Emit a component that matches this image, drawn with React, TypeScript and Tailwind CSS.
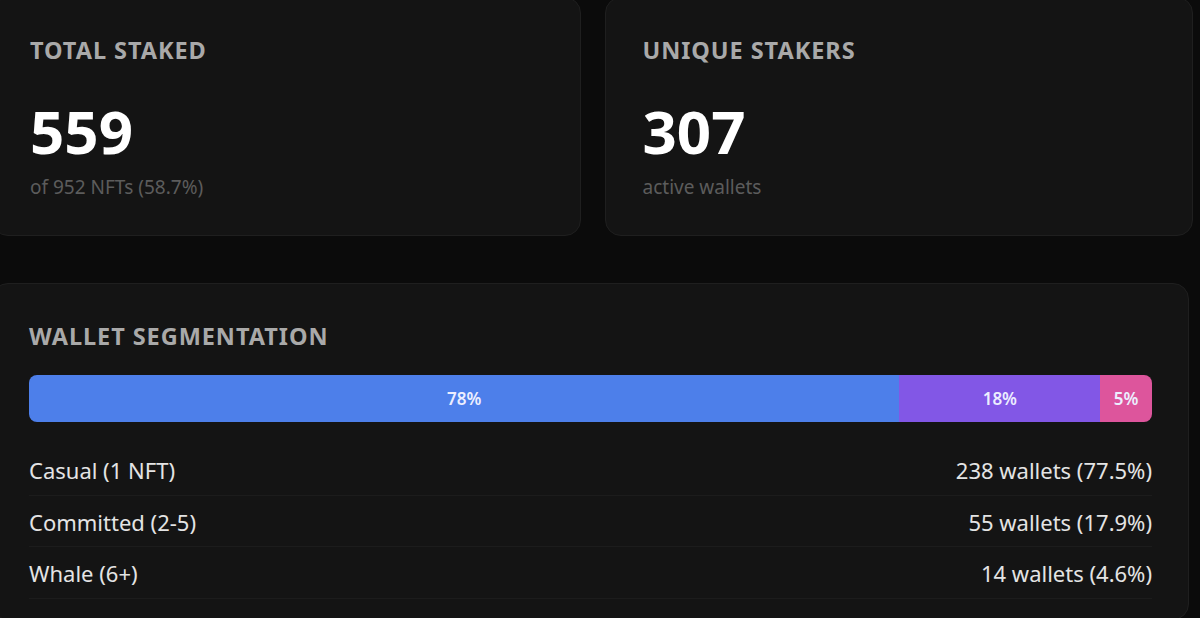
const segments = [
  { label: '78%', pct: 77.5, color: 'bg-[#4d7fea]' },
  { label: '18%', pct: 17.9, color: 'bg-[#8257e6]' },
  { label: '5%', pct: 4.6, color: 'bg-[#dd559c]' },
];

const rows = [
  { name: 'Casual (1 NFT)', value: '238 wallets (77.5%)' },
  { name: 'Committed (2-5)', value: '55 wallets (17.9%)' },
  { name: 'Whale (6+)', value: '14 wallets (4.6%)' },
];

function StatCard({ title, value, sub }: { title: string; value: string; sub: string }) {
  return (
    <div className="rounded-[16px] border border-[#1f1f1f] bg-[#141414] px-[37px] pt-[38px] pb-[35px]">
      <h3 className="text-[23.5px] leading-[28px] font-bold tracking-[0.04em] text-[#a9a9a9] uppercase">{title}</h3>
      <div className="mt-[37px] text-[60px] leading-[60px] font-bold text-white">{value}</div>
      <p className="mt-[14px] text-[19px] leading-[25px] text-[#5c5c5c]">{sub}</p>
    </div>
  );
}

export default function App() {
  return (
    <div
      className="h-[618px] w-[1200px] overflow-hidden bg-[#0b0b0b]"
      style={{ fontFamily: '"Noto Sans", "Open Sans", sans-serif' }}
    >
      <div className="-ml-[8px] -mt-[3px] w-[1201px]">
        <div className="grid grid-cols-2 gap-[24px]">
          <StatCard title="Total Staked" value="559" sub="of 952 NFTs (58.7%)" />
          <StatCard title="Unique Stakers" value="307" sub="active wallets" />
        </div>
        <div className="mt-[47px] w-[1197px] rounded-[16px] border border-[#1f1f1f] bg-[#141414] px-[36px] pt-[38px] pb-[20px]">
          <h3 className="text-[23.5px] leading-[28px] font-bold tracking-[0.04em] text-[#a9a9a9] uppercase">
            Wallet Segmentation
          </h3>
          <div className="mt-[25px] flex h-[47px] overflow-hidden rounded-[8px]">
            {segments.map((s) => (
              <div
                key={s.label}
                className={`${s.color} flex items-center justify-center text-[17px] font-semibold text-[#eceeff]`}
                style={{ width: `${s.pct}%` }}
              >
                {s.label}
              </div>
            ))}
          </div>
          <div className="mt-[22px]">
            {rows.map((r) => (
              <div
                key={r.name}
                className="flex h-[51.5px] items-center justify-between border-b border-[#1c1c1c] pt-[3px] text-[22px] text-[#e4e4e4]"
              >
                <span>{r.name}</span>
                <span>{r.value}</span>
              </div>
            ))}
          </div>
        </div>
      </div>
    </div>
  );
}
